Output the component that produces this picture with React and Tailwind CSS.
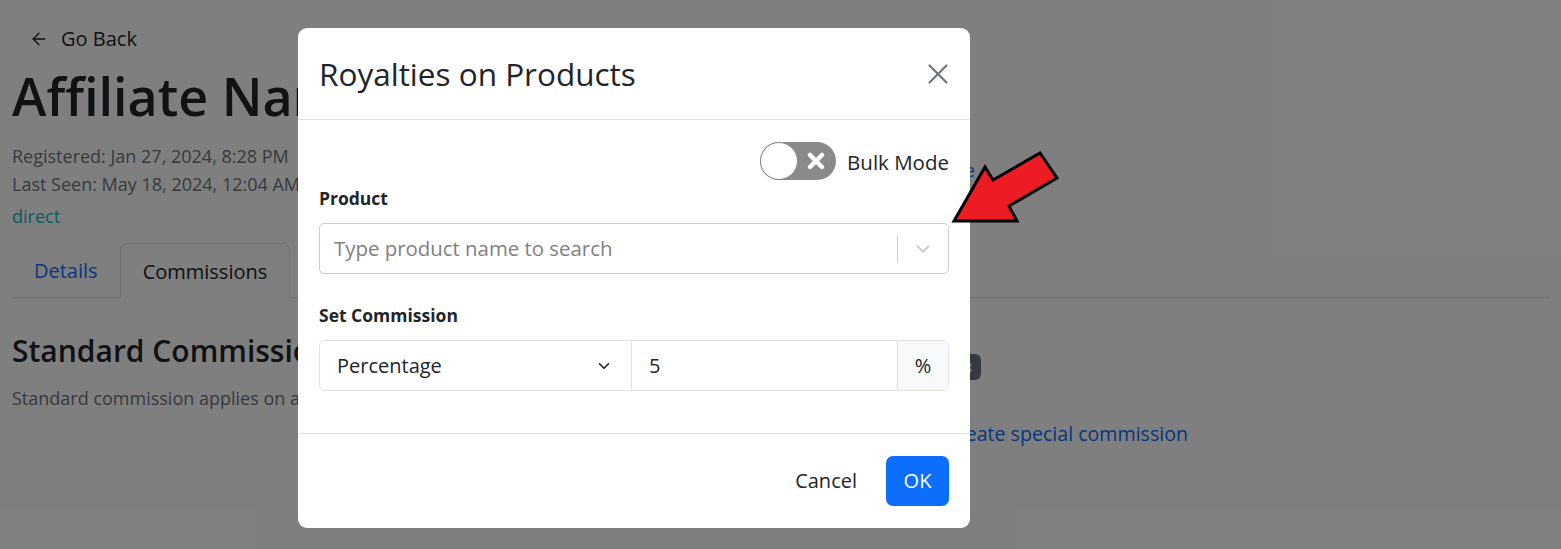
import { ArrowLeft, ChevronDown, X } from "lucide-react";

const font = { fontFamily: '"Open Sans", "Noto Sans", sans-serif' };

const Toggle = () => (
  <div className="relative w-[76px] h-[38px] rounded-full bg-[#8a8a8a] flex items-center">
    <div className="absolute left-0 top-0 w-[38px] h-[38px] rounded-full bg-white border border-[#8a8a8a]"></div>
    <svg className="absolute right-[10px] top-[9px]" width="20" height="20" viewBox="0 0 20 20">
      <path d="M4 4 L16 16 M16 4 L4 16" stroke="white" strokeWidth="4.5" strokeLinecap="round" />
    </svg>
  </div>
);

const Page = () => (
  <div className="min-h-[549px] bg-white px-[12px] text-[#212529]">
    {/* Go back */}
    <div className="h-[76px] flex items-center pl-[17px] text-[20px] text-[#212529] gap-[12px] pt-[2px]">
      <ArrowLeft size={20} strokeWidth={1.6} />
      <span>Go Back</span>
    </div>
    <h1 className="text-[52px] font-semibold leading-[44px] -mt-[2px] whitespace-nowrap">Affiliate Name Here</h1>

    <div className="w-[963px] flex items-center justify-between mt-[24px]">
      <div className="text-[18px] text-[#6c757d] leading-[28px]">
        <div>Registered: Jan 27, 2024, 8:28 PM</div>
        <div>Last Seen: May 18, 2024, 12:04 AM</div>
      </div>
      <a className="text-[19px] text-[#0d6efd]">Edit profile</a>
    </div>
    <div className="text-[18px] text-[#17b8c8] leading-[32px] mt-[2px]">direct</div>

    {/* Tabs */}
    <div className="mt-[11px] flex border-b border-[#dee2e6] h-[55px] items-end">
      <div className="px-[22px] h-[54px] flex items-center pt-[2px] text-[20px] text-[#0d6efd]">Details</div>
      <div className="px-[22px] h-[55px] -mb-px flex items-center pt-[2px] text-[20px] text-[#212529] bg-white border border-[#dee2e6] border-b-white rounded-t-[7px]">
        Commissions
      </div>
    </div>

    <div className="flex mt-[31px]">
      <div className="w-[600px] shrink-0">
        <h3 className="text-[30px] font-semibold leading-[44px] whitespace-nowrap">Standard Commission</h3>
        <p className="text-[18px] text-[#6c757d] mt-[12px] whitespace-nowrap">Standard commission applies on all products.</p>
      </div>
      <div className="flex-1">
        <div className="w-[369px] flex items-center justify-end gap-[10px] mt-[16px]">
          <h3 className="text-[30px] font-semibold leading-[44px] whitespace-nowrap">Special Commissions</h3>
          <span className="bg-[#6c757d] text-white text-[15px] font-bold rounded-[6px] px-[9px] h-[26px] flex items-center">3</span>
        </div>
        <div className="w-[576px] flex justify-end mt-[30px]">
          <a className="text-[19.6px] text-[#0d6efd] whitespace-nowrap">+ Create special commission</a>
        </div>
      </div>
    </div>
  </div>
);

const Modal = () => (
  <div className="absolute left-[298px] top-[28px] w-[672px] h-[500px] bg-white rounded-[9px] flex flex-col text-[#212529]">
    <div className="h-[92px] px-[21px] flex items-center justify-between border-b border-[#dee2e6] shrink-0">
      <h4 className="text-[31.5px] leading-none whitespace-nowrap">Royalties on Products</h4>
      <X size={34} strokeWidth={1.5} className="text-[#6c757d] -mr-[6px]" />
    </div>

    <div className="flex-1 px-[21px] pt-[22px]">
      <div className="flex justify-end items-center gap-[11px]">
        <Toggle />
        <span className="text-[20.5px] pt-[3px]">Bulk Mode</span>
      </div>

      <label className="block text-[17.5px] font-bold mt-[5px] leading-[27px]">Product</label>
      <div className="mt-[11px] h-[51px] border border-[#cccccc] rounded-[5px] flex items-center">
        <span className="flex-1 pl-[14px] text-[20.4px] text-[#808080] whitespace-nowrap">Type product name to search</span>
        <div className="w-px h-[26px] bg-[#cccccc]"></div>
        <div className="w-[50px] flex justify-center text-[#cccccc]">
          <ChevronDown size={22} strokeWidth={2.2} />
        </div>
      </div>

      <label className="block text-[17.5px] font-bold mt-[28px] leading-[27px]">Set Commission</label>
      <div className="mt-[11px] h-[51px] border border-[#dee2e6] rounded-[6px] flex">
        <div className="w-[311px] flex items-center justify-between pl-[17px] pr-[18px] text-[20px]">
          <span>Percentage</span>
          <ChevronDown size={18} strokeWidth={2.2} />
        </div>
        <div className="flex-1 border-l border-[#dee2e6] flex items-center pl-[17px] text-[20px]">5</div>
        <div className="w-[51px] border-l border-[#dee2e6] bg-[#f8f9fa] rounded-r-[6px] flex items-center justify-center text-[20px]">%</div>
      </div>
    </div>

    <div className="h-[95px] border-t border-[#dee2e6] flex items-center justify-end px-[21px] gap-[29px] shrink-0">
      <span className="text-[20px]">Cancel</span>
      <button className="h-[50px] w-[63px] bg-[#0d6efd] text-white text-[20px] rounded-[7px]">OK</button>
    </div>
  </div>
);

export default function App() {
  return (
    <div className="relative w-[1561px] h-[549px] overflow-hidden" style={font}>
      <Page />
      <div className="absolute inset-0 bg-black/50"></div>
      <Modal />
      {/* annotation arrow */}
      <svg className="absolute left-0 top-0 pointer-events-none" width="1561" height="549">
        <polygon
          points="954,221 985,167 993,180 1040,153 1057,178 1009,206 1017,221"
          fill="#ed1c24"
          stroke="black"
          strokeWidth="3"
          strokeLinejoin="miter"
        />
      </svg>
    </div>
  );
}
